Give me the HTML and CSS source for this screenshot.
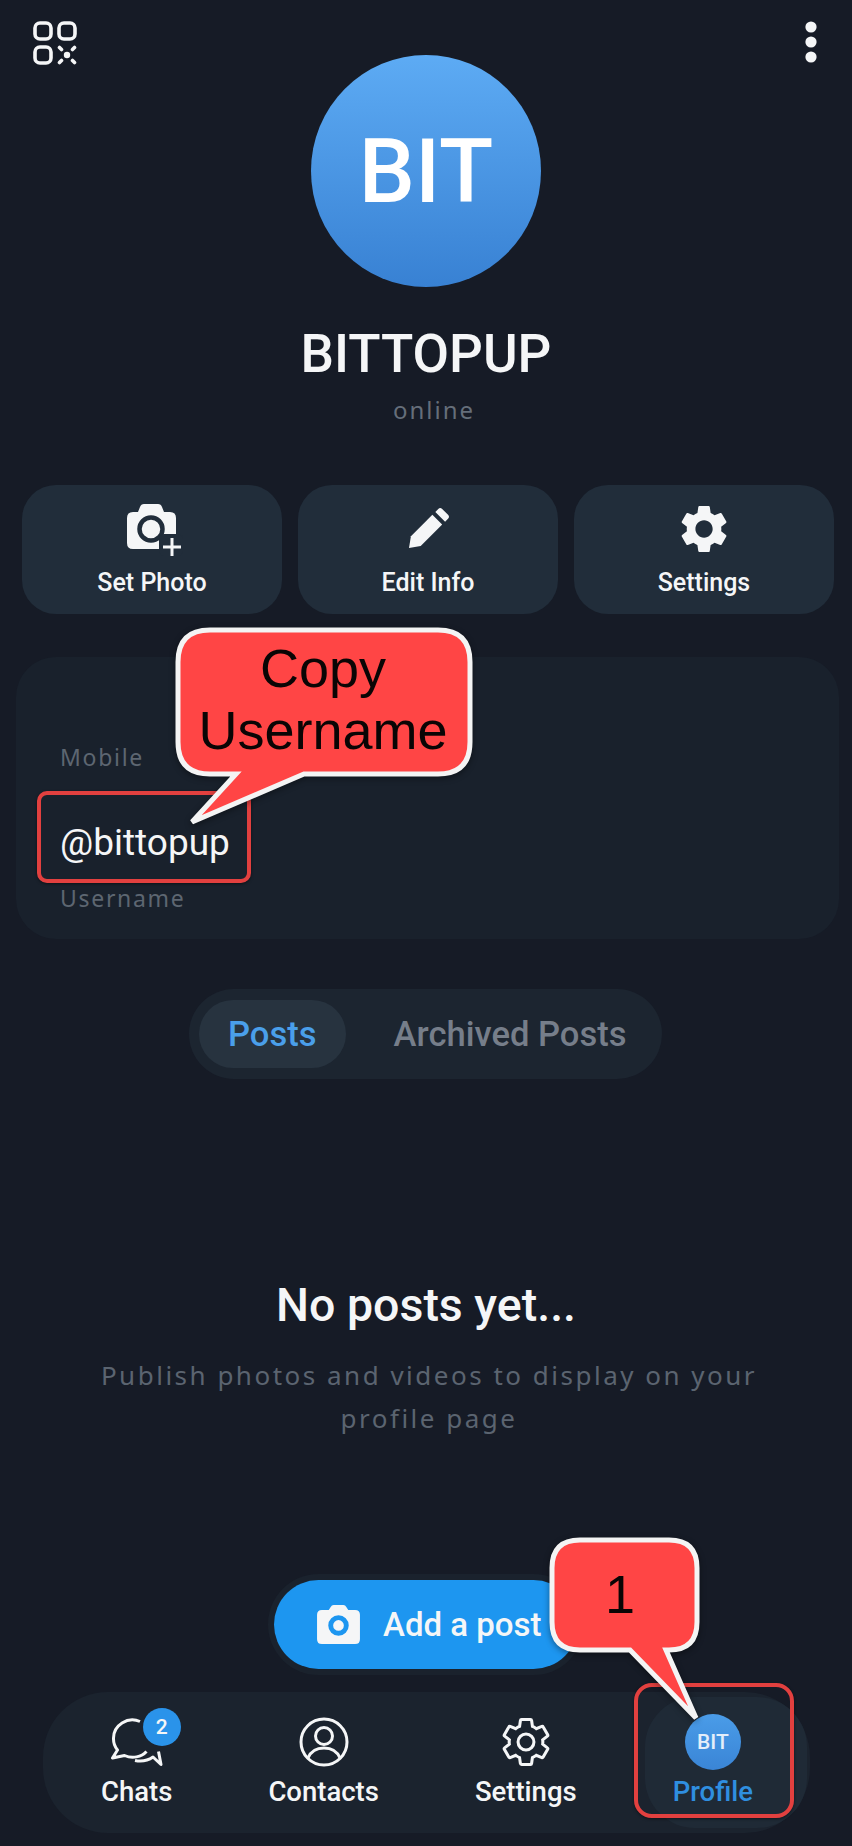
FILE: index.html
```html
<!DOCTYPE html>
<html lang="en">
<head>
    <meta charset="UTF-8">
    <title>Profile</title>
    <link rel="stylesheet" href="styles.css">
</head>
<body>
    <div class="page">
        <header class="top">
            <svg class="qr-icon" viewBox="0 0 44 44">
                <rect x="2" y="2" width="16" height="16" rx="5"/>
                <rect x="26" y="2" width="16" height="16" rx="5"/>
                <rect x="2" y="26" width="16" height="16" rx="5"/>
                <circle class="dot" cx="34" cy="34" r="3.200"/>
                <path class="dash" d="M26.500 26.500l2 2M41.500 26.500l-2 2M26.500 41.500l2-2M41.500 41.500l-2-2"/>
            </svg>
            <div class="avatar">BIT</div>
            <svg class="more-icon" viewBox="0 0 12 42">
                <circle cx="6" cy="6" r="5.600"/>
                <circle cx="6" cy="21" r="5.600"/>
                <circle cx="6" cy="36" r="5.600"/>
            </svg>
        </header>

        <h1 class="name">BITTOPUP</h1>
        <div class="status">online</div>

        <section class="actions">
            <button class="action">
                <svg class="action-icon photo" viewBox="0 0 56 52">
                    <path class="solid" d="M6 8h5l2-5q1-3 4-3h14q3 0 4 3l2 5h6q6 0 6 6v25q0 6-6 6H6q-6 0-6-6V14q0-6 6-6z"/>
                    <circle class="ring" cx="24" cy="25" r="11.500"/>
                    <rect class="cut" x="32" y="30" width="24" height="22" rx="5"/>
                    <path class="plus" d="M45 34v18M36 43h18"/>
                </svg>
                <span>Set Photo</span>
            </button>
            <button class="action">
                <svg class="action-icon pencil" viewBox="0 0 42 42">
                    <path class="solid" d="M1 41l2-12L25 7l10 10-22 22z"/>
                    <path class="solid" d="M28 4l3-3q2-2 4 0l6 6q2 2 0 4l-3 3z"/>
                </svg>
                <span>Edit Info</span>
            </button>
            <button class="action">
                <svg class="action-icon" viewBox="2.400 2 19.200 20">
                    <path class="solid" d="M19.140 12.940c.04-.3.06-.61.06-.94 0-.32-.02-.64-.07-.94l2.030-1.580c.18-.14.23-.41.12-.61l-1.920-3.320c-.12-.22-.37-.29-.59-.22l-2.390.96c-.5-.38-1.030-.7-1.620-.94l-.36-2.540c-.04-.24-.24-.41-.48-.41h-3.840c-.24 0-.43.17-.47.41l-.36 2.540c-.59.24-1.130.57-1.620.94l-2.390-.96c-.22-.08-.47 0-.59.22L2.740 8.870c-.12.21-.08.47.12.61l2.030 1.580c-.05.3-.09.63-.09.94s.02.64.07.94l-2.030 1.580c-.18.14-.23.41-.12.61l1.920 3.320c.12.22.37.29.59.22l2.390-.96c.5.38 1.030.7 1.620.94l.36 2.540c.05.24.24.41.48.41h3.840c.24 0 .44-.17.47-.41l.36-2.540c.59-.24 1.130-.56 1.620-.94l2.390.96c.22.08.47 0 .59-.22l1.920-3.320c.12-.22.07-.47-.12-.61l-2.010-1.580zM12 15.600c-1.980 0-3.600-1.620-3.600-3.600s1.620-3.600 3.600-3.600 3.600 1.620 3.600 3.600-1.620 3.600-3.600 3.600z"/>
                </svg>
                <span>Settings</span>
            </button>
        </section>

        <section class="info">
            <div class="info-row first">
                <div class="info-label">Mobile</div>
            </div>
            <div class="info-row">
                <div class="info-value">@bittopup</div>
                <div class="info-label">Username</div>
            </div>
        </section>

        <div class="tabs">
            <div class="tab active">Posts</div>
            <div class="tab">Archived Posts</div>
        </div>

        <section class="empty">
            <h2>No posts yet...</h2>
            <p>Publish photos and videos to display on your profile page</p>
        </section>

        <button class="add-post">
            <svg class="add-icon" viewBox="0 0 44 40">
                <path class="solid" d="M5 5h7l2-3q1-2 3-2h10q2 0 3 2l2 3h7q5 0 5 5v25q0 5-5 5H5q-5 0-5-5V10q0-5 5-5z"/>
                <circle class="ring-blue" cx="22" cy="21" r="8"/>
            </svg>
            <span>Add a post</span>
        </button>

        <nav class="nav">
            <div class="nav-item">
                <div class="nav-icon chats">
                    <svg class="chat-svg" viewBox="0 0 54 50">
                        <path d="M30 4.500C18 -1 3 8 3.500 22c0 4 1.500 8 4 11L2.500 41l12-2.500c8 3.500 17 1.500 22-4"/>
                        <path d="M25 43.500c7 1.500 13 0 18-3.500l8 7.500-2.500-13"/>
                    </svg>
                    <span class="badge">2</span>
                </div>
                <span class="nav-label">Chats</span>
            </div>
            <div class="nav-item">
                <div class="nav-icon">
                    <svg class="line-svg" viewBox="0 0 50 50">
                        <circle cx="25" cy="25" r="23"/>
                        <circle cx="25" cy="19" r="8.500"/>
                        <path d="M9 41c3-7 9-10 16-10s13 3 16 10"/>
                    </svg>
                </div>
                <span class="nav-label">Contacts</span>
            </div>
            <div class="nav-item">
                <div class="nav-icon">
                    <svg class="line-svg" viewBox="1.800 1.300 20.400 21.400">
                        <path class="thin" d="M19.140 12.940c.04-.3.06-.61.06-.94 0-.32-.02-.64-.07-.94l2.030-1.580c.18-.14.23-.41.12-.61l-1.920-3.320c-.12-.22-.37-.29-.59-.22l-2.390.96c-.5-.38-1.030-.7-1.620-.94l-.36-2.540c-.04-.24-.24-.41-.48-.41h-3.840c-.24 0-.43.17-.47.41l-.36 2.540c-.59.24-1.130.57-1.620.94l-2.390-.96c-.22-.08-.47 0-.59.22L2.740 8.870c-.12.21-.08.47.12.61l2.030 1.580c-.05.3-.09.63-.09.94s.02.64.07.94l-2.030 1.580c-.18.14-.23.41-.12.61l1.920 3.320c.12.22.37.29.59.22l2.390-.96c.5.38 1.030.7 1.620.94l.36 2.540c.05.24.24.41.48.41h3.840c.24 0 .44-.17.47-.41l.36-2.540c.59-.24 1.130-.56 1.620-.94l2.390.96c.22.08.47 0 .59-.22l1.920-3.320c.12-.22.07-.47-.12-.61l-2.010-1.580z"/>
                        <circle class="thin" cx="12" cy="12" r="3.400"/>
                    </svg>
                </div>
                <span class="nav-label">Settings</span>
            </div>
            <div class="nav-item current">
                <div class="nav-icon">
                    <div class="mini-avatar">BIT</div>
                </div>
                <span class="nav-label">Profile</span>
            </div>
        </nav>

        <!-- tutorial marks drawn over the screenshot -->
        <div class="mark mark-username"></div>
        <div class="mark mark-profile"></div>

        <svg class="callout callout-copy" viewBox="0 0 310 212">
            <path d="M40 8H268Q300 8 300 40V120Q300 152 268 152H134L22 200L66 152H40Q8 152 8 120V40Q8 8 40 8Z"/>
            <text x="153" y="65">Copy</text>
            <text x="153" y="127">Username</text>
        </svg>

        <svg class="callout callout-one" viewBox="0 0 160 196">
            <path d="M36 8H125Q153 8 153 36V90Q153 118 125 118H122L152 186L86 118H36Q8 118 8 90V36Q8 8 36 8Z"/>
            <text x="76" y="81">1</text>
        </svg>
    </div>
</body>
</html>
```

FILE: styles.css
```css
* {
    margin: 0;
    padding: 0;
    box-sizing: border-box;
}

body {
    background-color: #161b26;
    color: #f5f6f7;
    font-family: Roboto, 'Liberation Sans', sans-serif;
}

.page {
    position: relative;
    display: flex;
    flex-direction: column;
    width: 852px;
    height: 1846px;
    overflow: hidden;
}

.top {
    display: grid;
    grid-template-columns: 1fr 232px 1fr;
    padding: 21px 33px 0;
    align-items: start;
}

.qr-icon {
    width: 44px;
    height: 44px;
    fill: none;
    stroke: #f5f6f7;
    stroke-width: 3.600;
}

.qr-icon .dot {
    fill: #f5f6f7;
    stroke: none;
}

.qr-icon .dash {
    stroke-linecap: round;
}

.more-icon {
    justify-self: end;
    width: 12px;
    height: 42px;
    margin-right: 2px;
    fill: #f5f6f7;
}

.avatar {
    display: flex;
    align-items: center;
    justify-content: center;
    width: 230px;
    height: 232px;
    margin-top: 34px;
    margin-left: 1px;
    border-radius: 50%;
    background: linear-gradient(#5dabf4, #3881d3);
    color: #fff;
    font-size: 89px;
    font-weight: 500;
}

.name {
    margin-top: 37px;
    text-align: center;
    font-size: 53px;
    line-height: 60px;
    font-weight: 500;
}

.status {
    margin-top: 11px;
    padding-left: 16px;
    text-align: center;
    font-family: 'Noto Sans', sans-serif;
    font-size: 24px;
    line-height: 30px;
    letter-spacing: 2px;
    color: #656e7a;
}

.actions {
    display: grid;
    grid-template-columns: repeat(3, 260px);
    gap: 16px;
    margin: 60px 0 0 22px;
}

.action {
    display: flex;
    flex-direction: column;
    align-items: center;
    height: 129px;
    padding-top: 20px;
    border: none;
    border-radius: 34px;
    background-color: #212d3a;
    color: #f5f6f7;
    font-family: inherit;
    font-size: 25px;
    font-weight: 500;
    line-height: 30px;
}

.action span {
    margin-top: 1px;
}

.action-icon {
    height: 48px;
    margin-bottom: 14px;
    fill: #f5f6f7;
}

.action-icon.photo {
    width: 56px;
    height: 52px;
    margin: -1px 0 11px 6px;
}

.action-icon.pencil {
    width: 41px;
    height: 41px;
    margin: 3px 0 18px;
}

.ring {
    fill: #f5f6f7;
    stroke: #212d3a;
    stroke-width: 4.500;
}

.cut {
    fill: #212d3a;
}

.plus {
    fill: none;
    stroke: #f5f6f7;
    stroke-width: 3;
}

.info {
    display: flex;
    flex-direction: column;
    gap: 49px;
    width: 823px;
    height: 282px;
    margin: 43px 0 0 16px;
    padding: 85px 44px 0;
    border-radius: 40px;
    background-color: #19212c;
}

.info-value {
    font-size: 37px;
    line-height: 44px;
    margin-bottom: 18px;
}

.info-label {
    font-family: 'Noto Sans', sans-serif;
    font-size: 23px;
    line-height: 30px;
    letter-spacing: 1.700px;
    color: #5d6671;
}

.tabs {
    display: flex;
    gap: 19px;
    align-self: flex-start;
    margin: 50px 0 0 189px;
    padding: 11px 6px 11px 10px;
    border-radius: 45px;
    background-color: #1c2530;
    font-size: 34.600px;
    font-weight: 500;
    color: #767e8a;
}

.tab {
    display: flex;
    align-items: center;
    height: 68px;
    padding: 0 29px;
    border-radius: 34px;
}

.tab.active {
    background-color: #27333f;
    color: #4a9fea;
}

.empty {
    margin-top: 201px;
    text-align: center;
}

.empty h2 {
    font-size: 46.500px;
    line-height: 50px;
    font-weight: 500;
}

.empty p {
    width: 700px;
    margin: 24px auto 0;
    padding-left: 6px;
    font-family: 'Noto Sans', sans-serif;
    font-size: 26px;
    line-height: 43px;
    letter-spacing: 2.500px;
    color: #5b6470;
}

.add-post {
    display: flex;
    align-items: center;
    gap: 23px;
    align-self: flex-start;
    height: 89px;
    margin: 140px 0 0 274px;
    padding: 0 36px 0 43px;
    border: none;
    border-radius: 45px;
    background-color: #1d96f0;
    box-shadow: 0 0 0 6px #1a222d;
    color: #f5f6f7;
    font-family: inherit;
    font-size: 33px;
    font-weight: 500;
}

.add-icon {
    width: 43px;
    height: 39px;
    fill: #f5f6f7;
}

.ring-blue {
    fill: #f5f6f7;
    stroke: #1d96f0;
    stroke-width: 5;
}

.nav {
    display: flex;
    gap: 96px;
    width: 767px;
    height: 141px;
    margin: 23px 0 0 43px;
    padding: 25px 0 0 58px;
    border-radius: 65px;
    background-color: #1b232e;
}

.nav-item {
    position: relative;
    display: flex;
    flex-direction: column;
    align-items: center;
}

.nav-item.current::before {
    content: "";
    position: absolute;
    top: -20px;
    bottom: 5px;
    left: -28px;
    right: -54px;
    border-radius: 50px;
    background-color: #1f2a36;
}

.nav-icon {
    position: relative;
    display: flex;
    justify-content: center;
    height: 50px;
}

.nav-label {
    position: relative;
    margin-top: 8px;
    font-size: 27.500px;
    line-height: 34px;
    font-weight: 500;
}

.current .nav-label {
    color: #2f8fe0;
}

.chat-svg {
    width: 54px;
    height: 50px;
    fill: none;
    stroke: #f5f6f7;
    stroke-width: 3;
    stroke-linejoin: round;
}

.line-svg {
    width: 50px;
    height: 50px;
    fill: none;
    stroke: #f5f6f7;
    stroke-width: 3;
}

.thin {
    stroke-width: 1.300;
}

.badge {
    position: absolute;
    top: -9px;
    left: 33px;
    display: flex;
    align-items: center;
    justify-content: center;
    width: 38px;
    height: 38px;
    border-radius: 50%;
    background-color: #2a93ea;
    font-size: 21px;
    font-weight: 500;
}

.mini-avatar {
    position: relative;
    display: flex;
    align-items: center;
    justify-content: center;
    width: 56px;
    height: 56px;
    margin-top: -3px;
    border-radius: 50%;
    background: linear-gradient(#4a9ce8, #3a85d6);
    color: #e4eefa;
    font-size: 21px;
    font-weight: 500;
}

.mark {
    position: absolute;
    border: 4px solid #e2403f;
    border-radius: 10px;
    box-shadow: 0 1px 3px rgba(0, 0, 0, 0.5);
}

.mark-username {
    left: 37px;
    top: 791px;
    width: 214px;
    height: 92px;
}

.mark-profile {
    left: 634px;
    top: 1683px;
    width: 160px;
    height: 135px;
    border-radius: 18px;
}

.callout {
    position: absolute;
    overflow: visible;
    filter: drop-shadow(0 2px 3px rgba(0, 0, 0, 0.4));
}

.callout path {
    fill: #ff4545;
    stroke: #f4f4f4;
    stroke-width: 5;
}

.callout text {
    fill: #0a0505;
    font-family: 'Liberation Sans', sans-serif;
    font-size: 54px;
    text-anchor: middle;
}

.callout-copy {
    left: 170px;
    top: 622px;
    width: 310px;
    height: 212px;
}

.callout-one {
    left: 544px;
    top: 1532px;
    width: 160px;
    height: 196px;
}
```
